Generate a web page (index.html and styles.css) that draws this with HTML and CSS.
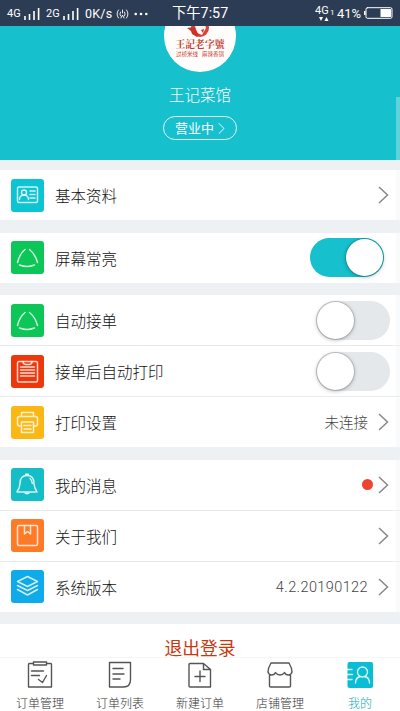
FILE: index.html
```html
<!DOCTYPE html>
<html lang="zh-CN">
<head>
<meta charset="utf-8">
<title>我的</title>
<link rel="stylesheet" href="styles.css">
</head>
<body>
<div class="phone">
  <header class="status">
    <div class="status-left">
      <span class="net">4G</span>
      <svg class="bars" width="16" height="12" viewBox="0 0 16 12"><path d="M1 8v4M5.500 6v6M10 3v9M14.600 0v12"/></svg>
      <span class="net second">2G</span>
      <svg class="bars" width="16" height="12" viewBox="0 0 16 12"><path d="M1 8v4M5.500 6v6M10 3v9M14.600 0v12"/></svg>
      <span class="speed">0K/s</span>
      <svg class="hotspot" width="13" height="12" viewBox="0 0 13 12"><path d="M2.500 2Q-.5 6 2.500 10M10.500 2Q13.500 6 10.500 10M4.500 4Q3 6 4.500 8M8.500 4Q10 6 8.500 8M5 10l1.500-3L8 10M6.500 2v3"/></svg>
      <svg class="dots" width="14" height="4" viewBox="0 0 14 4"><circle cx="1.700" cy="2" r="1.300"/><circle cx="7" cy="2" r="1.300"/><circle cx="12.300" cy="2" r="1.300"/></svg>
    </div>
    <div class="clock">下午7:57</div>
    <div class="status-right">
      <span class="data">4G<svg width="10" height="4" viewBox="0 0 10 4"><path d="M0 0h4L2 4zM5.500 4h4l-2-4z"/></svg></span><span class="sim">1</span>
      <span class="percent">41%</span>
      <svg class="battery" width="29" height="12" viewBox="0 0 29 12"><rect x="2" y=".7" width="26" height="10.600" rx="1.500"/><path class="fill" d="M16.500 2h10.500v8H16.500zM0 4h1.500v4H0z"/></svg>
    </div>
  </header>

  <section class="profile">
    <div class="avatar">
      <svg class="mascot" width="28" height="18" viewBox="0 0 28 18"><circle cx="14" cy="8" r="9" fill="#d8443a"/><path d="M10 0h8l2 8-4 7-5-2-2-7z" fill="#fdf3ef"/><path d="M1 8l7-1 5 8-2 2-5-3-1-3z" fill="#c8342c"/><path d="M15 10l3-1-1 4z" fill="#c8342c"/></svg>
      <div class="brand">王記老字號</div>
      <div class="slogan"><span>过桥米线</span><span>麻辣香锅</span></div>
    </div>
    <div class="shop">王记菜馆</div>
    <div class="state"><span>营业中</span><svg width="7" height="11" viewBox="0 0 7 11"><path d="M1 .5l5 5-5 5"/></svg></div>
  </section>

  <main class="list">
    <section class="group">
      <div class="row">
        <svg class="tile cyan" viewBox="0 0 33 33"><rect x="6.500" y="8" width="20" height="15.500" rx="1.500"/><circle cx="13" cy="13.500" r="2.500"/><path d="M8.500 20.500c0-6 9-6 9 0M19 12h5M19 15.500h5M19 19h5"/></svg>
        <span class="label">基本资料</span>
        <svg class="arrow" width="11" height="18" viewBox="0 0 11 18"><path d="M1 1l8.500 8L1 17"/></svg>
      </div>
    </section>

    <section class="group">
      <div class="row">
        <svg class="tile green" viewBox="0 0 33 33"><path d="M14 8.500Q8.500 13 6.500 21.500M18.500 8.500Q24.500 13.500 26.500 21.500M8.500 24Q16 27 23.500 24"/></svg>
        <span class="label">屏幕常亮</span>
        <span class="switch on"></span>
      </div>
    </section>

    <section class="group">
      <div class="row">
        <svg class="tile green" viewBox="0 0 33 33"><path d="M14 8.500Q8.500 13 6.500 21.500M18.500 8.500Q24.500 13.500 26.500 21.500M8.500 24Q16 27 23.500 24"/></svg>
        <span class="label">自动接单</span>
        <span class="switch"></span>
      </div>
      <div class="row">
        <svg class="tile red" viewBox="0 0 33 33"><rect x="6.500" y="6.500" width="20" height="20.500" rx="1.500"/><path d="M12 6.500q0 3 3 3h3q3 0 3-3M9.500 12h14M9.500 15h14M9.500 18h14M9.500 21h14"/></svg>
        <span class="label">接单后自动打印</span>
        <span class="switch"></span>
      </div>
      <div class="row">
        <svg class="tile yellow" viewBox="0 0 33 33"><path d="M10.500 10.500v-4h12v4M10.500 20H8.500q-2 0-2-2v-5.500q0-2 2-2h16q2 0 2 2V18q0 2-2 2h-2M10.500 16h12v10.500h-12zM13 19.500h7M13 23h7"/></svg>
        <span class="label">打印设置</span>
        <span class="value">未连接</span>
        <svg class="arrow" width="11" height="18" viewBox="0 0 11 18"><path d="M1 1l8.500 8L1 17"/></svg>
      </div>
    </section>

    <section class="group">
      <div class="row">
        <svg class="tile teal" viewBox="0 0 33 33"><path d="M16 7.500c-5.500 0-7 4.500-7 8 0 4-1 5.500-3 8.500h20c-2-3-3-4.500-3-8.500 0-3.500-1.500-8-7-8M19 10.500q2 1.500 2.300 5"/><path class="solid" d="M12.500 24.500h7q-3.500 4-7 0zM14 5.500h4v2h-4z"/></svg>
        <span class="label">我的消息</span>
        <span class="badge"></span>
        <svg class="arrow" width="11" height="18" viewBox="0 0 11 18"><path d="M1 1l8.500 8L1 17"/></svg>
      </div>
      <div class="row">
        <svg class="tile orange" viewBox="0 0 33 33"><rect x="6.500" y="6.500" width="20" height="20" rx="1.500"/><path d="M13.500 6.500v8.500l3-2.500 3 2.500V6.500"/></svg>
        <span class="label">关于我们</span>
        <svg class="arrow" width="11" height="18" viewBox="0 0 11 18"><path d="M1 1l8.500 8L1 17"/></svg>
      </div>
      <div class="row">
        <svg class="tile blue" viewBox="0 0 33 33"><path d="M16.500 6.500l10 5-10 5-10-5zM6.500 15.500l10 5 10-5M6.500 19.500l10 5.500 10-5.500"/></svg>
        <span class="label">系统版本</span>
        <span class="value version">4.2.20190122</span>
        <svg class="arrow" width="11" height="18" viewBox="0 0 11 18"><path d="M1 1l8.500 8L1 17"/></svg>
      </div>
    </section>

    <div class="logout">退出登录</div>
  </main>

  <nav class="tabs">
    <div class="tab">
      <svg width="26" height="28" viewBox="0 0 26 28"><path d="M6 2.500H2.500q-1 0-1 1v22.500h23V3.500q0-1-1-1H20M6.500 1h13v3h-13zM4.500 10h12M4.500 14.500h8M11.500 18.500l4 3 4-7"/></svg>
      <span>订单管理</span>
    </div>
    <div class="tab">
      <svg width="26" height="28" viewBox="0 0 26 28"><path d="M2.500 1.500h21v17q0 7.500-7 7.500h-14zM6 7.500h10M6 13h11M6 18h7"/></svg>
      <span>订单列表</span>
    </div>
    <div class="tab">
      <svg width="26" height="28" viewBox="0 0 26 28"><path d="M16.500 2.500H3q-1 0-1 1V25q0 1 1 1h20.500V8.500zM16.500 2.500v6h7M13 10v10.500M8 15.500h10"/></svg>
      <span>新建订单</span>
    </div>
    <div class="tab">
      <svg width="26" height="28" viewBox="0 0 26 28"><path d="M4 2h18q3 5 3 9-1 3-3.500 3-3 0-4-2.500-1.500 2.500-4.500 2.500t-4.500-2.500Q7.500 14 4.500 14 2 14 1 11q0-4 3-9zM2.500 14v11q0 1 1 1h19q1 0 1-1V14"/></svg>
      <span>店铺管理</span>
    </div>
    <div class="tab active">
      <svg width="26" height="28" viewBox="0 0 26 28"><rect x=".5" y="1" width="25.500" height="26" rx="2"/><path d="M.5 8.500H5M.5 13.500h5M.5 18.500H5"/><circle cx="15.500" cy="11" r="5"/><path d="M8.500 22q0-5.500 5-6.500M17.500 15.500q5 1 5 6.500"/></svg>
      <span>我的</span>
    </div>
  </nav>
  <div class="scrollbar"></div>
</div>
</body>
</html>
```

FILE: styles.css
```css
* { box-sizing: border-box; }
body {
  margin: 0;
  font-family: "Noto Sans CJK SC", sans-serif;
  font-weight: 300;
  color: #222;
}
svg { flex: none; fill: none; stroke-linecap: round; stroke-linejoin: round; }
.phone {
  position: relative;
  width: 400px;
  height: 711px;
  overflow: hidden;
  display: flex;
  flex-direction: column;
  background: #edf1f3;
}

.status {
  height: 26px;
  flex: none;
  display: grid;
  grid-template-columns: 172px 57px 1fr;
  align-items: center;
  background: #2d3c55;
  color: #fff;
  font-family: Roboto, "Noto Sans CJK SC", sans-serif;
  font-weight: 400;
  line-height: 26px;
  white-space: nowrap;
}
.status-left, .status-right { display: flex; align-items: center; height: 26px; }
.status-left { padding: 1px 0 0 7px; }
.net { width: 17px; font-size: 11px; }
.second { margin-left: 6px; width: 17px; }
.bars { stroke: #fff; stroke-width: 1.6; stroke-linecap: butt; }
.speed { margin-left: 6px; width: 31px; font-size: 12.5px; letter-spacing: .2px; }
.hotspot { stroke: #fff; stroke-width: .9; }
.dots { margin-left: 5px; fill: #fff; }
.clock { font-size: 14.3px; height: 26px; line-height: 27px; }
.status-right { padding-left: 86px; }
.data { position: relative; width: 15px; font-size: 11px; line-height: 22px; height: 26px; }
.data svg { position: absolute; left: 4px; top: 17px; fill: #fff; }
.sim { width: 6px; font-size: 8px; }
.percent { width: 28px; padding-left: 1px; font-size: 13px; padding-top: 1px; }
.battery rect { stroke: #fff; stroke-width: 1; }
.battery .fill { fill: #fff; }

.profile {
  height: 134px;
  flex: none;
  display: flex;
  flex-direction: column;
  align-items: center;
  overflow: hidden;
  background: #16c0cd;
  color: #fff;
}
.avatar {
  width: 72px;
  height: 72px;
  margin-top: -26px;
  flex: none;
  border-radius: 50%;
  background: #fffdfb;
  color: #c43a30;
  display: flex;
  flex-direction: column;
  align-items: center;
  padding-top: 20px;
}
.mascot { flex: none; }
.brand { font: 700 9.8px/13px "Noto Serif CJK SC", "Noto Sans CJK SC", serif; white-space: nowrap; }
.slogan { display: flex; gap: 4px; font-size: 5.5px; line-height: 7px; font-weight: 400; white-space: nowrap; }
.shop { margin-top: 11px; font-size: 15.5px; line-height: 22px; }
.state {
  margin-top: 11px;
  width: 74px;
  height: 24px;
  border: 1px solid #dff8fa;
  border-radius: 12px;
  display: flex;
  align-items: center;
  justify-content: center;
  gap: 4px;
  font-size: 13px;
  font-weight: 400;
  line-height: 22px;
}
.state svg { stroke: #fff; stroke-width: .9; }

.list { flex: 1; min-height: 0; overflow: hidden; padding-top: 10px; }
.group { margin-bottom: 12.5px; background: #fff; }
.row { height: 50px; display: flex; align-items: center; padding: 0 11px; }
.row + .row { height: 51px; border-top: 1px solid #e8eaec; }
.tile {
  width: 33px;
  height: 33px;
  border-radius: 3px;
  stroke: rgba(255, 255, 255, .8);
  stroke-width: 1.5;
}
.tile .solid { fill: #d9f7f5; stroke: none; }
.cyan { background: #0cc4d2; }
.green { background: #0cc657; }
.red { background: #ed380c; }
.yellow { background: #fbb814; }
.teal { background: #15bdc6; }
.orange { background: #fd7a27; }
.blue { background: #0faaea; }
.label { margin-left: 11px; flex: 1; font-size: 15.5px; line-height: 24px; color: #111; }
.value { margin-right: 10px; font-size: 14.5px; line-height: 24px; color: #444; }
.version { padding-top: 3px; font-family: Roboto, sans-serif; letter-spacing: .4px; }
.arrow { stroke: #888; stroke-width: 1.5; stroke-linecap: butt; stroke-linejoin: miter; }
.badge { width: 11px; height: 11px; margin-right: 5px; border-radius: 50%; background: #f0432f; }
.switch {
  width: 74px;
  height: 39px;
  margin-right: -1px;
  border-radius: 20px;
  background: #e4e8eb;
  display: flex;
}
.switch::after {
  content: "";
  width: 37px;
  height: 37px;
  margin: 1px;
  border-radius: 50%;
  background: #fff;
  box-shadow: 0 0 0 1px rgba(0, 0, 0, .12), 0 1px 4px rgba(0, 0, 0, .3);
}
.switch.on { justify-content: flex-end; margin-right: 5px; background: #16c0cd; }
.logout {
  height: 50px;
  background: #fff;
  color: #c8380f;
  font-size: 17.8px;
  line-height: 47px;
  font-weight: 400;
  text-align: center;
}

.tabs {
  height: 54px;
  flex: none;
  display: grid;
  grid-template-columns: repeat(5, 1fr);
  background: #fff;
  border-top: 1px solid #f6f6f6;
}
.tab {
  display: flex;
  flex-direction: column;
  align-items: center;
  padding-top: 3px;
  font-size: 12px;
  line-height: 18px;
  color: #333;
}
.tab svg { stroke: #555; stroke-width: 1.4; margin-bottom: 5px; }
.tab.active { color: #16a8b5; }
.tab.active svg { stroke: #d9f7f9; }
.tab.active rect { fill: #09bdd4; stroke: none; }
.scrollbar {
  position: absolute;
  right: 0;
  top: 97px;
  width: 4px;
  height: 527px;
  background: rgba(237, 241, 243, .35);
}
```
